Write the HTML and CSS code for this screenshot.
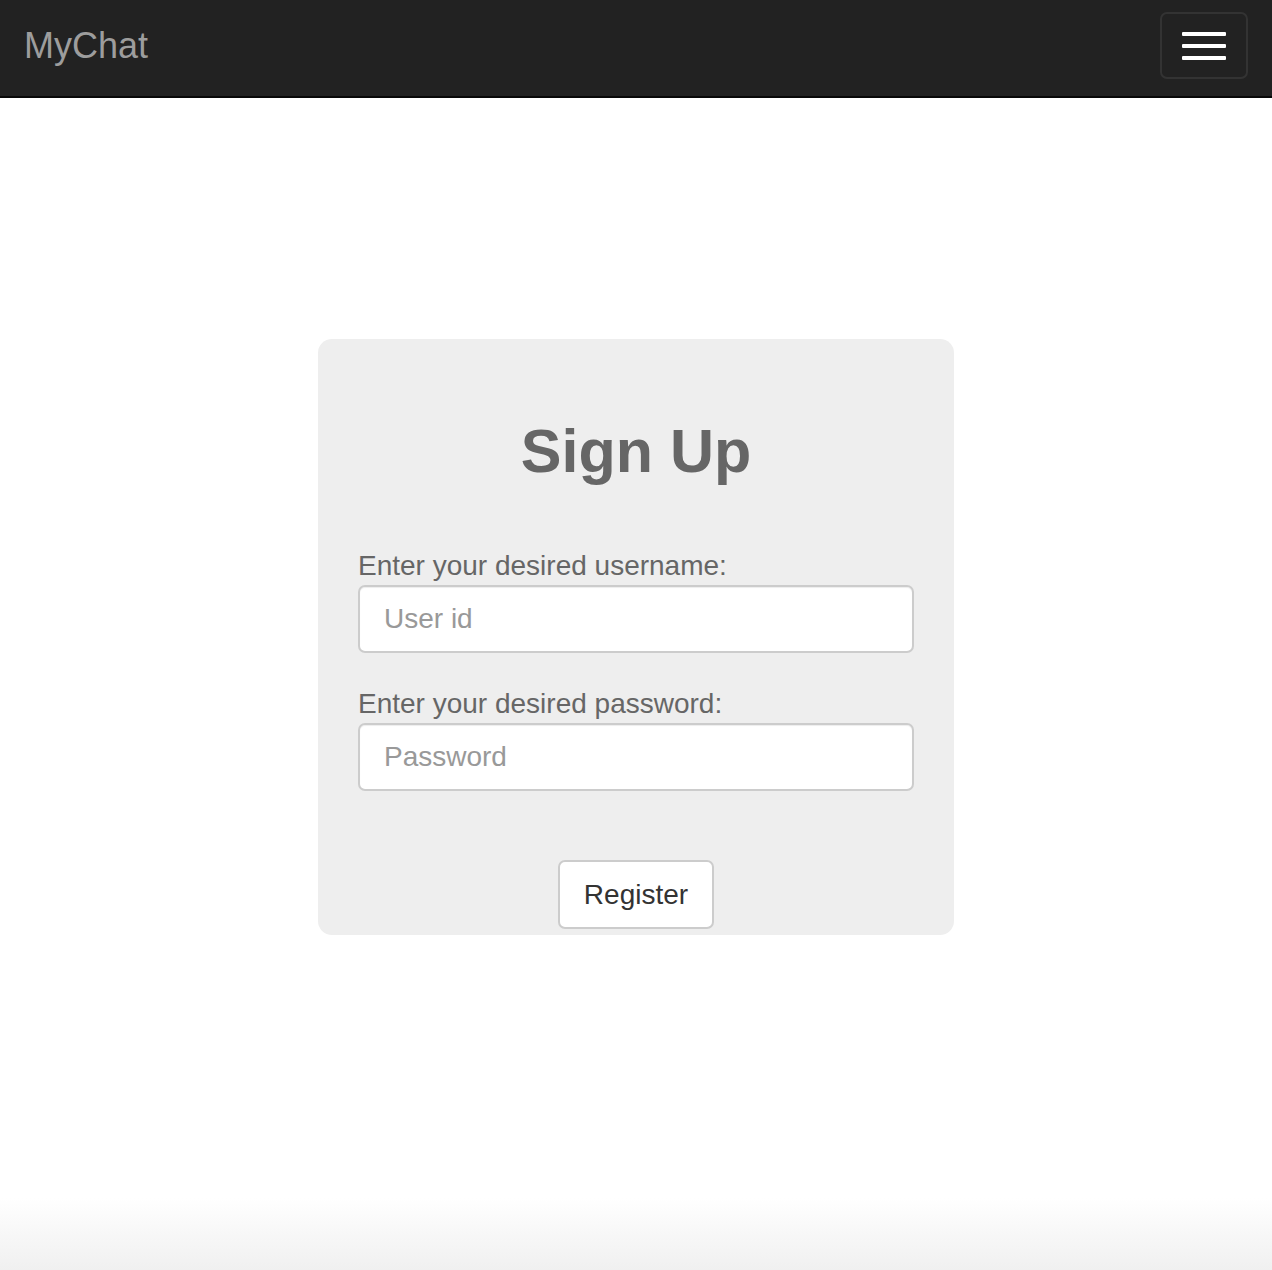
FILE: index.html
```html
<!DOCTYPE html>
<html>
<head>
<meta charset="utf-8">
<title>MyChat</title>
<link rel="stylesheet" href="styles.css">
</head>
<body>
<nav class="navbar">
  <a class="brand" href="#">MyChat</a>
  <button class="toggle" type="button" aria-label="Toggle navigation">
    <span class="bar"></span>
    <span class="bar"></span>
    <span class="bar"></span>
  </button>
</nav>
<main class="page">
  <form class="card">
    <h1 class="title">Sign Up</h1>
    <div class="group">
      <label class="label" for="user">Enter your desired username:</label>
      <input class="field" id="user" type="text" placeholder="User id">
    </div>
    <div class="group">
      <label class="label" for="pass">Enter your desired password:</label>
      <input class="field" id="pass" type="password" placeholder="Password">
    </div>
    <div class="actions">
      <button class="btn" type="button">Register</button>
    </div>
  </form>
</main>
<div class="fade"></div>
</body>
</html>
```
FILE: styles.css
```css
* { box-sizing: border-box; }
html, body { margin: 0; padding: 0; }
body {
  font-family: "Liberation Sans", Arial, Helvetica, sans-serif;
  background: #fff;
  color: #333;
  height: 1270px;
  display: flex;
  flex-direction: column;
}
.navbar {
  height: 98px;
  background: #222;
  border-bottom: 2px solid #080808;
  display: flex;
  align-items: center;
  justify-content: space-between;
  padding: 0 24px 0 24px;
}
.brand {
  color: #9d9d9d;
  text-decoration: none;
  font-size: 36px;
  line-height: 1;
  margin-top: -4px;
}
.toggle {
  width: 88px;
  height: 67px;
  margin-top: -5px;
  background: transparent;
  border: 2px solid #333;
  border-radius: 7px;
  display: flex;
  flex-direction: column;
  align-items: center;
  justify-content: center;
  gap: 8px;
  padding: 0;
}
.bar {
  display: block;
  width: 44px;
  height: 4px;
  background: #fff;
  border-radius: 1px;
}
.page {
  flex: 1;
  display: flex;
  justify-content: center;
  padding-top: 241px;
}
.card {
  width: 636px;
  height: 596px;
  background: #eee;
  border-radius: 14px;
  padding: 74px 40px 0 40px;
  display: flex;
  flex-direction: column;
}
.title {
  margin: 0 0 60px 0;
  text-align: center;
  font-size: 61px;
  font-weight: bold;
  color: #666;
  line-height: 76px;
}
.group {
  display: flex;
  flex-direction: column;
  margin-bottom: 34px;
}
.label {
  font-size: 28px;
  color: #666;
  line-height: 34px;
  margin-bottom: 2px;
}
.field {
  width: 100%;
  height: 68px;
  border: 2px solid #ccc;
  border-radius: 7px;
  background: #fff;
  padding: 0 24px;
  font-family: inherit;
  font-size: 28px;
  color: #555;
  box-shadow: inset 0 1px 1px rgba(0,0,0,0.075);
}
.field::placeholder { color: #999; }
.actions {
  display: flex;
  justify-content: center;
  margin-top: 35px;
}
.btn {
  width: 156px;
  height: 69px;
  background: #fff;
  border: 2px solid #ccc;
  border-radius: 7px;
  font-family: inherit;
  font-size: 28px;
  color: #333;
  padding: 0;
}
.fade {
  height: 72px;
  margin-top: -72px;
  background: linear-gradient(to bottom, #fff, #f0f0f0);
}
```
